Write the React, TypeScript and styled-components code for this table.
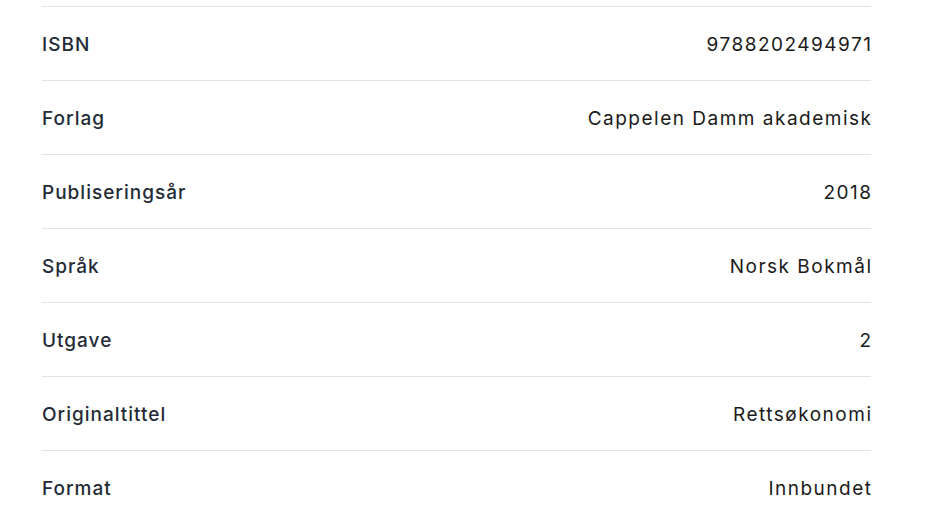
import { createGlobalStyle, styled } from "styled-components";

const rows = [
  { label: "ISBN", value: "9788202494971" },
  { label: "Forlag", value: "Cappelen Damm akademisk" },
  { label: "Publiseringsår", value: "2018" },
  { label: "Språk", value: "Norsk Bokmål" },
  { label: "Utgave", value: "2" },
  { label: "Originaltittel", value: "Rettsøkonomi" },
  { label: "Format", value: "Innbundet" },
];

const App = () => {
  return (
    <>
      <GlobalStyle />
      <Page>
        <DetailList>
          {rows.map((row) => (
            <Row key={row.label}>
              <Label>{row.label}</Label>
              <Value>{row.value}</Value>
            </Row>
          ))}
        </DetailList>
      </Page>
    </>
  );
};

const GlobalStyle = createGlobalStyle`
  body {
    margin: 0;
    background: #ffffff;
    font-family: "Inter", "Noto Sans", sans-serif;
  }
`;

const Page = styled.div`
  width: 940px;
  height: 515px;
  overflow: hidden;
  padding: 6px 69px 0 42px;
  box-sizing: border-box;
`;

const DetailList = styled.dl`
  margin: 0;
  display: flex;
  flex-direction: column;
`;

const Row = styled.div`
  display: flex;
  justify-content: space-between;
  align-items: center;
  height: 74px;
  padding-top: 2px;
  box-sizing: border-box;
  border-top: 1px solid #e2e2e2;
`;

const Label = styled.dt`
  font-size: 19px;
  font-weight: 500;
  letter-spacing: 1px;
  color: #232b36;
`;

const Value = styled.dd`
  margin: 0 -1.5px 0 0;
  font-size: 19px;
  font-weight: 400;
  letter-spacing: 1.5px;
  color: #1a1a1a;
`;

export default App;
